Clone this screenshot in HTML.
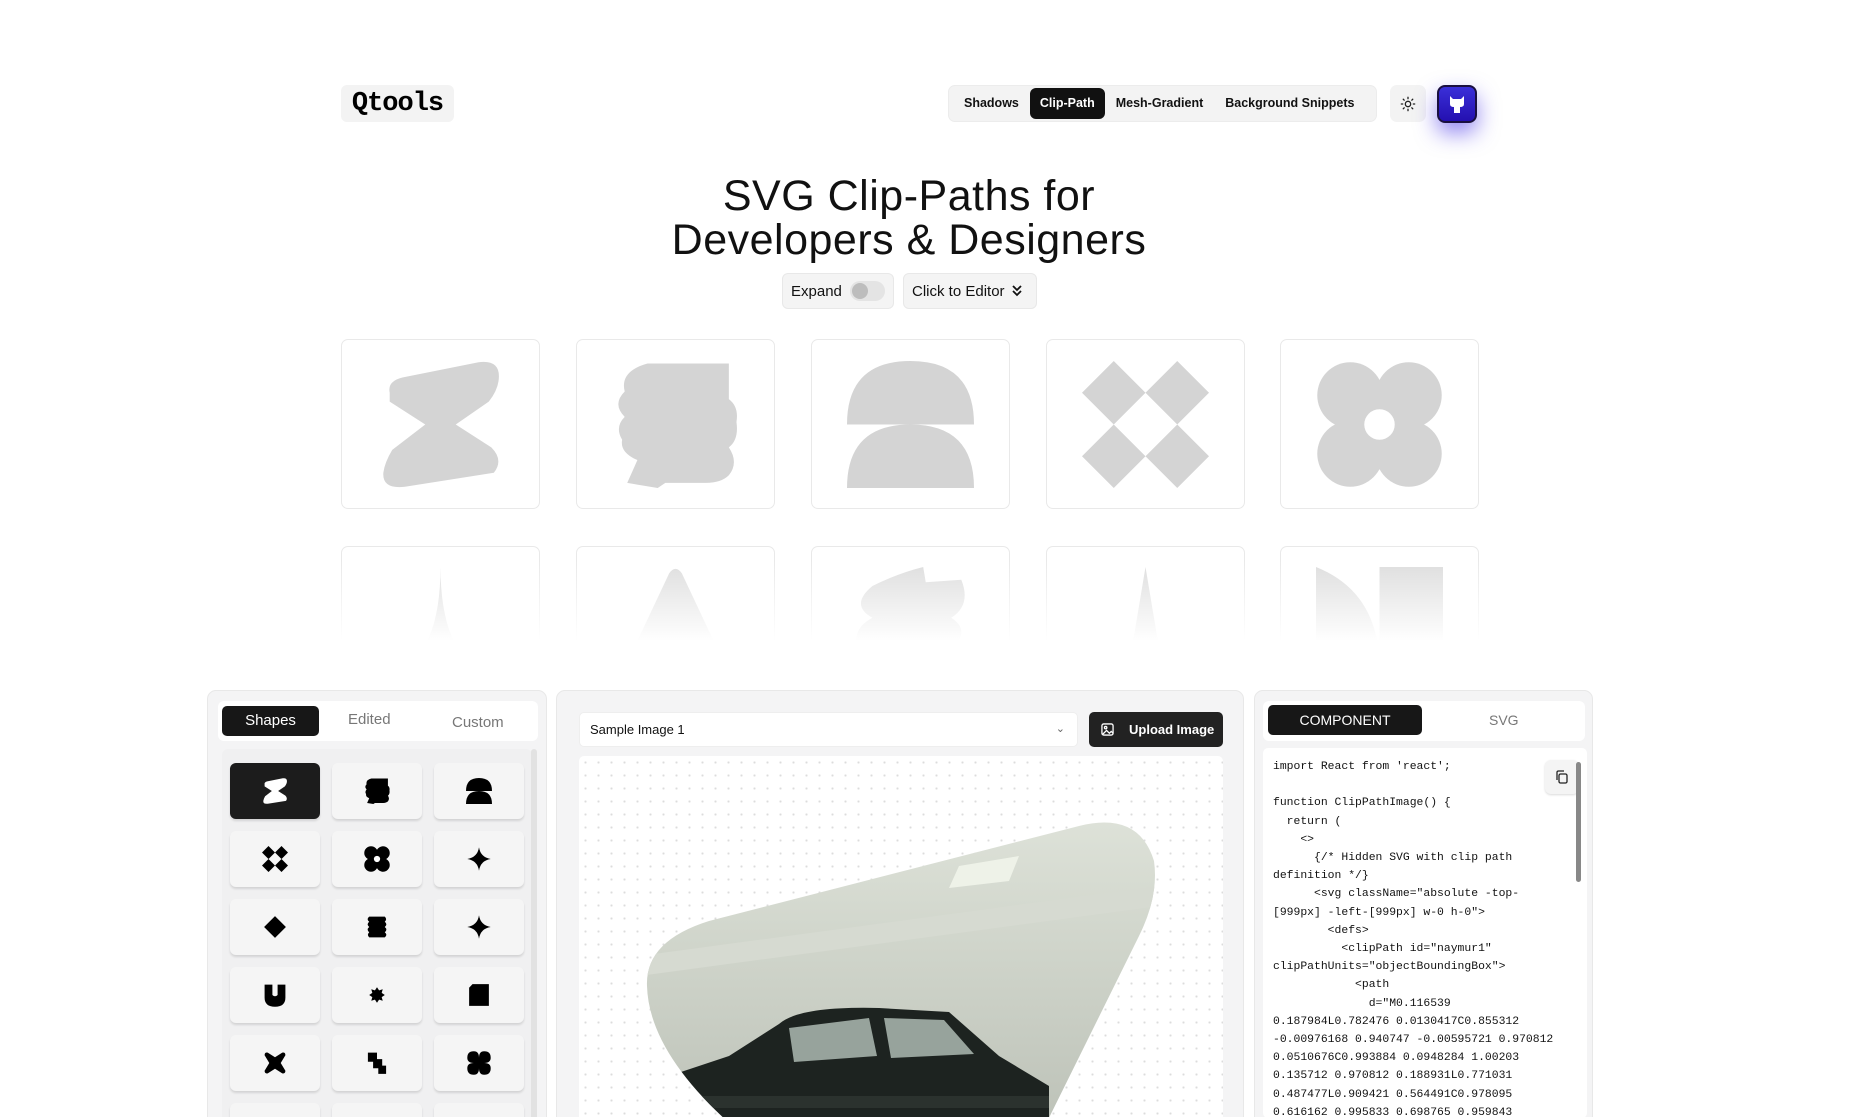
<!DOCTYPE html>
<html><head><meta charset="utf-8">
<style>
*{box-sizing:border-box;margin:0;padding:0}
html,body{width:1852px;height:1117px;overflow:hidden;background:#fff;font-family:"Liberation Sans",sans-serif;color:#111}
#root{position:relative;width:1852px;height:1117px;overflow:hidden}
.abs{position:absolute}
.logo{left:341px;top:85px;width:113px;height:37px;background:#f3f3f3;border-radius:6px;font-family:"Liberation Mono",monospace;font-weight:900;font-size:27px;letter-spacing:-1px;display:flex;align-items:center;justify-content:center;color:#000}
.nav{left:948px;top:85px;width:429px;height:37px;background:#f3f3f3;border-radius:7px;border:1px solid #ececec;font-size:12.5px;font-weight:700;display:flex;align-items:center;padding:0 4px;white-space:nowrap}
.nav span{padding:0 11px;height:31px;line-height:31px;border-radius:6px}
.nav .act{background:#111;color:#fff;padding:0 10px}
.sun{left:1390px;top:85px;width:36px;height:37px;background:#f3f3f3;border-radius:7px;display:flex;align-items:center;justify-content:center}
.gh{left:1437px;top:85px;width:40px;height:38px;border-radius:8px;background:linear-gradient(#3a2fd8,#2410b0);border:2px solid #1a1040;box-shadow:0 10px 22px rgba(60,40,230,.55);display:flex;align-items:center;justify-content:center}
h1{position:absolute;left:0;width:1818px;top:174px;text-align:center;font-weight:400;font-size:43px;line-height:44px;letter-spacing:.5px}
.btn{height:36px;top:273px;background:#f4f4f4;border:1px solid #e8e8e8;border-radius:6px;font-size:15px;display:flex;align-items:center;padding:0 8px;white-space:nowrap}
.card{width:199px;height:170px;border:1px solid #e9e9e9;border-radius:7px;display:flex;align-items:center;justify-content:center;background:#fff}
.card svg{width:127px;height:127px}
.fade{height:98px;overflow:hidden;border-bottom:none;border-radius:7px 7px 0 0;align-items:flex-start;padding-top:20px}
.fadecover{left:330px;top:560px;width:1180px;height:90px;background:linear-gradient(rgba(255,255,255,0),#fff 90%)}
.panel{top:690px;height:440px;background:#f4f4f5;border:1px solid #e8e8e8;border-radius:9px;overflow:hidden}
.tile{position:absolute;width:90px;height:56px;background:#f5f5f5;border-radius:6px;box-shadow:0 2px 2px rgba(0,0,0,.12);display:flex;align-items:center;justify-content:center}
.tile svg{width:26px;height:26px}
.code{font-family:"Liberation Mono",monospace;font-size:11.4px;line-height:18.2px;white-space:pre;color:#111}
</style></head><body><div id="root">
<svg width="0" height="0" style="position:absolute"><defs>
<symbol id="s1" viewBox="0 0 100 100"><path d="M10 25Q8 16 20 13L80 1Q96-1 96 12Q96 22 88 32L62 50L90 68Q100 78 92 88L22 99Q4 101 5 88Q6 80 12 70L38 50L10 32Z"/></symbol>
<symbol id="s2" viewBox="0 0 100 100"><path d="M28 2H92V30Q100 36 98 48Q100 62 92 68Q100 80 92 90Q86 96 74 96H42L36 100L12 96L20 78Q6 72 8 62Q2 52 10 44Q0 34 10 24Q6 8 28 2Z"/></symbol>
<symbol id="s5" viewBox="0 0 100 100"><circle cx="27" cy="27" r="26"/><circle cx="73" cy="27" r="26"/><circle cx="27" cy="73" r="26"/><circle cx="73" cy="73" r="26"/><rect x="25" y="25" width="50" height="50"/><circle cx="50" cy="50" r="12" fill="#fff"/></symbol>
</defs></svg>
<div class="abs logo">Qtools</div>
<div class="abs nav"><span>Shadows</span><span class="act">Clip-Path</span><span>Mesh-Gradient</span><span>Background Snippets</span></div>
<div class="abs sun"><svg width="16" height="16" viewBox="0 0 24 24" fill="none" stroke="#222" stroke-width="2" stroke-linecap="round"><circle cx="12" cy="12" r="4"/><path d="M12 2v2M12 20v2M4.9 4.9l1.4 1.4M17.7 17.7l1.4 1.4M2 12h2M20 12h2M4.9 19.1l1.4-1.4M17.7 6.3l1.4-1.4"/></svg></div>
<div class="abs gh"><svg width="18" height="20" viewBox="0 0 18 20"><path d="M2 2l3 3h8l3-3v8q0 3-4 3v6h-6v-6q-4 0-4-3z" fill="#fff"/></svg></div>
<h1>SVG Clip-Paths for<br>Developers &amp; Designers</h1>
<div class="abs btn" style="left:782px;width:112px">Expand <span style="display:inline-block;margin-left:8px;width:38px;height:20px;border-radius:10px;background:#e4e4e4;position:relative"><span style="position:absolute;left:2px;top:2px;width:16px;height:16px;border-radius:50%;background:#bdbdbd"></span></span></div>
<div class="abs btn" style="left:903px;width:134px">Click to Editor <svg style="margin-left:6px" width="12" height="14" viewBox="0 0 12 14" fill="none" stroke="#111" stroke-width="1.8"><path d="M2 2l4 4 4-4M2 7l4 4 4-4"/></svg></div>

<div class="abs card" style="left:341px;top:339px"><svg fill="#d4d4d4"><use href="#s1"/></svg></div>
<div class="abs card" style="left:576px;top:339px"><svg fill="#d4d4d4"><use href="#s2"/></svg></div>
<div class="abs card" style="left:811px;top:339px"><svg viewBox="0 0 100 100"><path d="M0 50Q0 0 50 0Q100 0 100 50ZM0 100Q0 50 50 50Q100 50 100 100Z" fill="#d4d4d4"/></svg></div>
<div class="abs card" style="left:1046px;top:339px"><svg viewBox="0 0 100 100"><path d="M25 0L50 25L25 50L0 25ZM75 0L100 25L75 50L50 25ZM25 50L50 75L25 100L0 75ZM75 50L100 75L75 100L50 75Z" fill="#d4d4d4"/></svg></div>
<div class="abs card" style="left:1280px;top:339px"><svg fill="#d4d4d4"><use href="#s5"/></svg></div>

<div class="abs card fade" style="left:341px;top:546px"><svg viewBox="0 0 100 100"><path d="M50 0Q50 80 0 90L100 90Q50 80 50 0Z" fill="#ddd"/></svg></div>
<div class="abs card fade" style="left:576px;top:546px"><svg viewBox="0 0 100 100"><path d="M45 5Q50-2 55 5L95 90H5Z" fill="#ddd"/></svg></div>
<div class="abs card fade" style="left:811px;top:546px"><svg viewBox="0 0 100 100"><path d="M20 15Q40 5 60 0L62 12L90 10Q98 30 82 40Q98 50 82 65H10Q2 50 20 40Q2 30 20 15Z" fill="#ddd"/></svg></div>
<div class="abs card fade" style="left:1046px;top:546px"><svg viewBox="0 0 100 100"><path d="M50 0L60 60L95 90H5L40 60Z" fill="#ddd"/></svg></div>
<div class="abs card fade" style="left:1280px;top:546px"><svg viewBox="0 0 100 100"><path d="M0 0Q50 20 50 80V0H100V100H0Z" fill="#ddd"/></svg></div>
<div class="abs fadecover"></div>

<div class="abs panel" style="left:207px;width:340px">
  <div class="abs" style="left:10px;top:10px;width:320px;height:40px;background:#fff;border-radius:6px;font-size:15px">
    <div class="abs" style="left:4px;top:5px;width:97px;height:30px;background:#171717;color:#fff;border-radius:5px;text-align:center;line-height:30px">Shapes</div>
    <div class="abs" style="left:130px;top:10px;color:#777">Edited</div>
    <div class="abs" style="left:234px;top:13px;color:#777">Custom</div>
  </div>
  <div class="abs" style="left:14px;top:58px;width:310px;height:400px;background:#f0f0f1;border-radius:6px"></div>
  <div class="abs" style="left:323px;top:58px;width:6px;height:400px;background:#e2e2e2;border-radius:3px"></div>
  <div class="tile" style="left:22px;top:72px;background:#1c1c1c"><svg fill="#fff"><use href="#s1"/></svg></div>
  <div class="tile" style="left:124px;top:72px"><svg><use href="#s2"/></svg></div>
  <div class="tile" style="left:226px;top:72px"><svg viewBox="0 0 100 100"><path d="M0 50Q0 0 50 0Q100 0 100 50ZM0 100Q0 50 50 50Q100 50 100 100Z"/></svg></div>
  <div class="tile" style="left:22px;top:140px"><svg viewBox="0 0 100 100"><path d="M25 0L50 25L25 50L0 25ZM75 0L100 25L75 50L50 25ZM25 50L50 75L25 100L0 75ZM75 50L100 75L75 100L50 75Z"/></svg></div>
  <div class="tile" style="left:124px;top:140px"><svg fill="#000"><use href="#s5"/></svg></div>
  <div class="tile" style="left:226px;top:140px"><svg viewBox="0 0 100 100"><path d="M50 5Q56 44 95 50Q56 56 50 95Q44 56 5 50Q44 44 50 5Z"/></svg></div>
  <div class="tile" style="left:22px;top:208px"><svg viewBox="0 0 100 100"><path d="M50 8L92 50L50 92L8 50Z"/></svg></div>
  <div class="tile" style="left:124px;top:208px"><svg viewBox="0 0 100 100"><path d="M20 10H80Q90 20 80 30Q92 40 80 50Q92 60 80 70Q92 80 80 90H20Q10 80 20 70Q8 60 20 50Q8 40 20 30Q8 20 20 10Z"/></svg></div>
  <div class="tile" style="left:226px;top:208px"><svg viewBox="0 0 100 100"><path d="M50 5Q56 44 95 50Q56 56 50 95Q44 56 5 50Q44 44 50 5Z"/></svg></div>
  <div class="tile" style="left:22px;top:276px"><svg viewBox="0 0 100 100"><path d="M10 10H40V50Q50 60 60 50V10H90V60Q90 95 50 95Q10 95 10 60Z"/></svg></div>
  <div class="tile" style="left:124px;top:276px"><svg viewBox="0 0 100 100"><path d="M50 20L58 32L72 28L68 42L80 50L68 58L72 72L58 68L50 80L42 68L28 72L32 58L20 50L32 42L28 28L42 32Z"/></svg></div>
  <div class="tile" style="left:226px;top:276px"><svg viewBox="0 0 100 100"><path d="M25 8H88V92H12V22Z"/></svg></div>
  <div class="tile" style="left:22px;top:344px"><svg viewBox="0 0 100 100"><path d="M10 20Q10 8 22 10L50 28L78 10Q90 8 90 20L72 50L90 80Q90 92 78 90L50 72L22 90Q10 92 10 80L28 50Z"/></svg></div>
  <div class="tile" style="left:124px;top:344px"><svg viewBox="0 0 100 100"><path d="M15 10H50V35H70V60H85V92H55V70H35V45H15Z"/></svg></div>
  <div class="tile" style="left:226px;top:344px"><svg viewBox="0 0 100 100"><path d="M30 5Q50 5 50 30Q50 5 70 5Q95 5 95 30Q95 50 70 50Q95 50 95 70Q95 95 70 95Q50 95 50 70Q50 95 30 95Q5 95 5 70Q5 50 30 50Q5 50 5 30Q5 5 30 5Z"/></svg></div>
  <div class="tile" style="left:22px;top:412px"></div><div class="tile" style="left:124px;top:412px"></div><div class="tile" style="left:226px;top:412px"></div>
</div>

<div class="abs panel" style="left:556px;width:688px">
  <div class="abs" style="left:22px;top:21px;width:499px;height:35px;background:#fff;border:1px solid #eee;border-radius:5px;font-size:13px;line-height:33px;padding-left:10px">Sample Image 1<span style="position:absolute;right:12px;top:0;color:#666;font-size:11px">&#8964;</span></div>
  <div class="abs" style="left:532px;top:21px;width:134px;height:35px;background:#222;color:#fff;border-radius:5px;font-size:13px;font-weight:700;line-height:35px;padding-left:40px;white-space:nowrap"><svg style="position:absolute;left:12px;top:11px" width="13" height="13" viewBox="0 0 14 14" fill="none" stroke="#fff" stroke-width="1.4"><rect x="1" y="1" width="12" height="12" rx="2"/><circle cx="5" cy="5" r="1.3"/><path d="M2 12l4-4 3 3 2-2 2 2"/></svg>Upload Image</div>
  <div class="abs" style="left:22px;top:65px;width:644px;height:380px;background-color:#fff;background-image:radial-gradient(#dcdcdc 1px,transparent 1.2px);background-size:13px 13px;border-radius:5px;overflow:hidden">
    <svg class="abs" style="left:0;top:0" width="644" height="380" viewBox="0 0 644 380">
      <defs>
        <clipPath id="b"><path d="M130 165L500 70Q560 55 575 105Q580 140 560 180L461 380H165Q70 300 68 230Q66 185 130 165Z"/></clipPath>
        <linearGradient id="w" x1="0" y1="0" x2="0" y2="1"><stop offset="0" stop-color="#e4e8df"/><stop offset=".5" stop-color="#d0d5cb"/><stop offset="1" stop-color="#bcc1b7"/></linearGradient>
      </defs>
      <g clip-path="url(#b)">
        <rect width="644" height="380" fill="url(#w)"/>
        <path d="M60 200L580 130V150L60 220Z" fill="#d6dad1"/>
        <path d="M380 110L440 100L430 125L370 132Z" fill="#eef2e8"/>
        <path d="M60 330L150 300L200 268Q220 250 300 252L370 256L420 300L470 330V380H60Z" fill="#1d2320"/>
        <path d="M210 272L290 262L298 300L215 306Z M305 262L365 264L395 298L312 302Z" fill="#97a39c"/>
        <path d="M80 340H470V352H80Z" fill="#2b322e"/>
      </g>
    </svg>
  </div>
</div>

<div class="abs panel" style="left:1254px;width:339px">
  <div class="abs" style="left:8px;top:10px;width:322px;height:40px;background:#fff;border-radius:6px;font-size:14px">
    <div class="abs" style="left:5px;top:4px;width:154px;height:30px;background:#171717;color:#fff;border-radius:5px;text-align:center;line-height:30px">COMPONENT</div>
    <div class="abs" style="left:226px;top:11px;color:#777">SVG</div>
  </div>
  <div class="abs" style="left:8px;top:57px;width:324px;height:370px;background:#fff;border-radius:5px;overflow:hidden">
    <div class="abs code" style="left:10px;top:10px">import React from 'react';

function ClipPathImage() {
  return (
    &lt;&gt;
      {/* Hidden SVG with clip path
definition */}
      &lt;svg className="absolute -top-
[999px] -left-[999px] w-0 h-0"&gt;
        &lt;defs&gt;
          &lt;clipPath id="naymur1"
clipPathUnits="objectBoundingBox"&gt;
            &lt;path
              d="M0.116539
0.187984L0.782476 0.0130417C0.855312
-0.00976168 0.940747 -0.00595721 0.970812
0.0510676C0.993884 0.0948284 1.00203
0.135712 0.970812 0.188931L0.771031
0.487477L0.909421 0.564491C0.978095
0.616162 0.995833 0.698765 0.959843</div>
    <div class="abs" style="left:282px;top:12px;width:34px;height:34px;background:#f4f4f4;border-radius:6px;box-shadow:0 1px 2px rgba(0,0,0,.15);display:flex;align-items:center;justify-content:center"><svg width="14" height="14" viewBox="0 0 14 14" fill="none" stroke="#222" stroke-width="1.3"><rect x="4" y="4" width="8" height="9" rx="1.5"/><path d="M2 10V2.5Q2 1 3.5 1H9"/></svg></div>
    <div class="abs" style="left:313px;top:14px;width:5px;height:120px;background:#888;border-radius:3px"></div>
  </div>
</div>
</div></body></html>
